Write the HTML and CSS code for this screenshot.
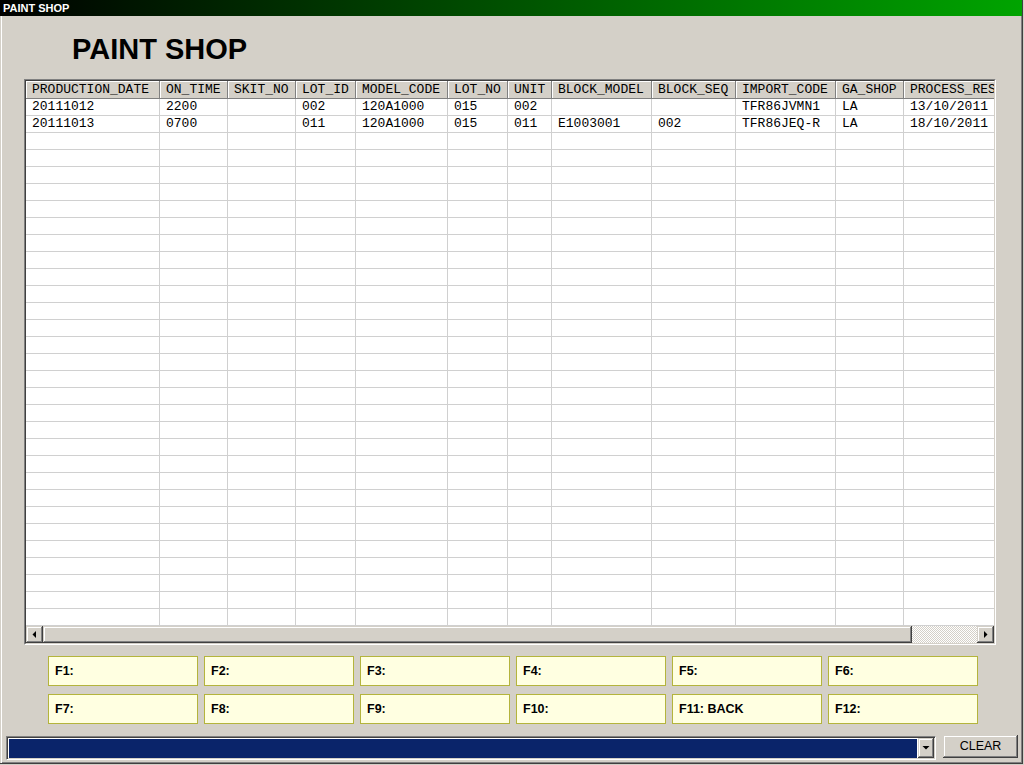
FILE: index.html
```html
<!DOCTYPE html>
<html>
<head>
<meta charset="utf-8">
<title>PAINT SHOP</title>
<link rel="stylesheet" href="styles.css">
</head>
<body>
<div class="window">
  <div class="titlebar">PAINT SHOP</div>
  <h1 class="heading">PAINT SHOP</h1>

  <div class="grid">
    <div class="grid-frame">
      <div class="grid-view">
        <div class="grid-row grid-head">
          <div class="cell">PRODUCTION_DATE</div>
          <div class="cell">ON_TIME</div>
          <div class="cell">SKIT_NO</div>
          <div class="cell">LOT_ID</div>
          <div class="cell">MODEL_CODE</div>
          <div class="cell">LOT_NO</div>
          <div class="cell">UNIT</div>
          <div class="cell">BLOCK_MODEL</div>
          <div class="cell">BLOCK_SEQ</div>
          <div class="cell">IMPORT_CODE</div>
          <div class="cell">GA_SHOP</div>
          <div class="cell">PROCESS_RESULT</div>
        </div>
        <div class="grid-row">
          <div class="cell">20111012</div>
          <div class="cell">2200</div>
          <div class="cell"></div>
          <div class="cell">002</div>
          <div class="cell">120A1000</div>
          <div class="cell">015</div>
          <div class="cell">002</div>
          <div class="cell"></div>
          <div class="cell"></div>
          <div class="cell">TFR86JVMN1</div>
          <div class="cell">LA</div>
          <div class="cell">13/10/2011</div>
        </div>
        <div class="grid-row">
          <div class="cell">20111013</div>
          <div class="cell">0700</div>
          <div class="cell"></div>
          <div class="cell">011</div>
          <div class="cell">120A1000</div>
          <div class="cell">015</div>
          <div class="cell">011</div>
          <div class="cell">E1003001</div>
          <div class="cell">002</div>
          <div class="cell">TFR86JEQ-R</div>
          <div class="cell">LA</div>
          <div class="cell">18/10/2011</div>
        </div>
        <div class="grid-filler">
          <div class="fcol"></div><div class="fcol"></div><div class="fcol"></div>
          <div class="fcol"></div><div class="fcol"></div><div class="fcol"></div>
          <div class="fcol"></div><div class="fcol"></div><div class="fcol"></div>
          <div class="fcol"></div><div class="fcol"></div><div class="fcol"></div>
        </div>
      </div>
      <div class="hscroll">
        <div class="sbtn"><svg width="17" height="17" viewBox="0 0 17 17"><polygon points="10,5 10,12 6.5,8.5" fill="#000"/></svg></div>
        <div class="thumb"></div>
        <div class="track"></div>
        <div class="sbtn"><svg width="17" height="17" viewBox="0 0 17 17"><polygon points="7,5 7,12 10.5,8.5" fill="#000"/></svg></div>
      </div>
    </div>
  </div>

  <div class="fkeys">
    <div class="fkey">F1:</div>
    <div class="fkey">F2:</div>
    <div class="fkey">F3:</div>
    <div class="fkey">F4:</div>
    <div class="fkey">F5:</div>
    <div class="fkey">F6:</div>
    <div class="fkey">F7:</div>
    <div class="fkey">F8:</div>
    <div class="fkey">F9:</div>
    <div class="fkey">F10:</div>
    <div class="fkey">F11: BACK</div>
    <div class="fkey">F12:</div>
  </div>

  <div class="bottombar">
    <div class="combo">
      <div class="combo-field"></div>
      <div class="combo-btn"><svg width="16" height="20" viewBox="0 0 16 20"><polygon points="4.5,8 11.5,8 8,11.5" fill="#000"/></svg></div>
    </div>
    <button class="clear" type="button">CLEAR</button>
  </div>
</div>
</body>
</html>
```

FILE: styles.css
```css
* { box-sizing: border-box; }
html, body { margin: 0; padding: 0; }
body {
  width: 1024px;
  height: 765px;
  overflow: hidden;
  background: #d4d0c8;
  font-family: "Liberation Sans", Arial, sans-serif;
}
.window {
  width: 1023px;
  height: 764px;
  background: #d4d0c8;
  border-right: 1px solid #404040;
  border-bottom: 1px solid #404040;
  box-shadow: inset 1px 0 0 #d4d0c8, inset 2px 0 0 #ffffff, inset -1px -1px 0 #808080;
}
.titlebar {
  height: 16px;
  line-height: 16px;
  padding-left: 3px;
  background: linear-gradient(to right, #000000 0%, #00a400 100%);
  color: #ffffff;
  font-weight: bold;
  font-size: 11px;
}
.heading {
  margin: 0;
  padding: 17px 0 14px 72px;
  font-size: 29px;
  line-height: 32px;
  font-weight: bold;
  color: #000;
}

/* data grid */
.grid {
  margin-left: 24px;
  width: 972px;
  height: 566px;
  border: 1px solid;
  border-color: #808080 #ffffff #ffffff #808080;
}
.grid-frame {
  height: 100%;
  border: 1px solid;
  border-color: #404040 #d4d0c8 #d4d0c8 #404040;
}
.grid-view {
  --cols: 134px 68px 68px 60px 92px 60px 44px 100px 84px 100px 68px 120px;
  height: 545px;
  overflow: hidden;
  background: #ffffff;
}
.grid-row {
  display: grid;
  grid-template-columns: var(--cols);
  width: max-content;
  height: 17px;
}
.cell {
  border-right: 1px solid #d0d0d0;
  border-bottom: 1px solid #d0d0d0;
  padding-left: 6px;
  font-family: "Liberation Mono", "Courier New", monospace;
  font-size: 13px;
  line-height: 16px;
  white-space: nowrap;
  overflow: hidden;
  color: #000;
}
.grid-head { height: 18px; }
.grid-head .cell {
  background: #d4d0c8;
  border-right-color: #808080;
  border-bottom-color: #808080;
  box-shadow: inset 1px 1px 0 #ffffff;
  line-height: 17px;
}
.grid-filler {
  display: grid;
  grid-template-columns: var(--cols);
  width: max-content;
  height: 493px;
}
.fcol {
  border-right: 1px solid #d0d0d0;
  background: repeating-linear-gradient(to bottom, transparent 0 16px, #d0d0d0 16px 17px);
}

/* horizontal scrollbar */
.hscroll {
  display: flex;
  height: 17px;
  background: #d4d0c8;
}
.sbtn, .thumb, .combo-btn, .clear {
  background: #d4d0c8;
  box-shadow: inset -1px -1px 0 #404040, inset 1px 1px 0 #d4d0c8,
              inset -2px -2px 0 #808080, inset 2px 2px 0 #ffffff;
}
.sbtn {
  flex: none;
  width: 17px;
  height: 17px;
}
.sbtn svg { display: block; }
.thumb {
  flex: none;
  width: 869px;
  height: 17px;
}
.track {
  flex: 1;
  height: 17px;
  background: repeating-conic-gradient(#ffffff 0 25%, #d4d0c8 0 50%) 0 0 / 2px 2px;
}

/* function keys */
.fkeys {
  display: grid;
  grid-template-columns: repeat(6, 150px);
  column-gap: 6px;
  row-gap: 8px;
  margin: 11px 0 0 48px;
}
.fkey {
  height: 30px;
  border: 1px solid #b4b43c;
  background: #ffffe1;
  padding-left: 6px;
  font-size: 12.5px;
  font-weight: bold;
  line-height: 28px;
  color: #000;
}

/* bottom bar */
.bottombar {
  display: flex;
  align-items: flex-start;
  gap: 7px;
  margin: 11px 0 0 6px;
}
.combo {
  display: flex;
  width: 930px;
  height: 24px;
  margin-top: 1px;
  border: 1px solid;
  border-color: #808080 #ffffff #ffffff #808080;
  box-shadow: inset 1px 1px 0 #404040, inset -1px -1px 0 #d4d0c8;
  padding: 1px;
  background: #ffffff;
}
.combo-field {
  flex: 1;
  margin: 1px 1px 0 1px;
  background: #0a246a;
}
.combo-btn {
  flex: none;
  width: 16px;
  height: 20px;
}
.combo-btn svg { display: block; }
.clear {
  width: 75px;
  height: 23px;
  margin: 0;
  padding: 0;
  border: none;
  font-family: "Liberation Sans", Arial, sans-serif;
  font-size: 12.5px;
  color: #000;
  line-height: 21px;
}
```
